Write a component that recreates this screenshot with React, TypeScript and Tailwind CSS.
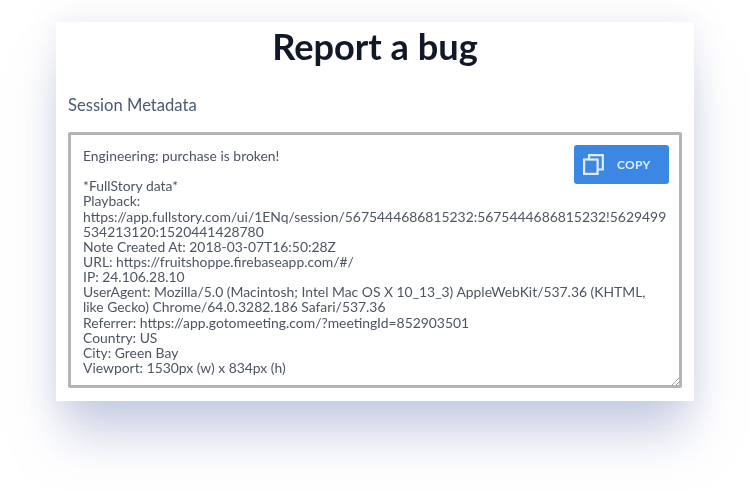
import React from 'react';

const metadataLines = [
  'Engineering: purchase is broken!',
  '',
  '*FullStory data*',
  'Playback:',
  'https://app.fullstory.com/ui/1ENq/session/5675444686815232:5675444686815232!5629499',
  '534213120:1520441428780',
  'Note Created At: 2018-03-07T16:50:28Z',
  'URL: https://fruitshoppe.firebaseapp.com/#/',
  'IP: 24.106.28.10',
  'UserAgent: Mozilla/5.0 (Macintosh; Intel Mac OS X 10_13_3) AppleWebKit/537.36 (KHTML,',
  'like Gecko) Chrome/64.0.3282.186 Safari/537.36',
  'Referrer: https://app.gotomeeting.com/?meetingId=852903501',
  'Country: US',
  'City: Green Bay',
  'Viewport: 1530px (w) x 834px (h)',
];

const App: React.FC = () => {
  return (
    <div className="w-[750px] h-[491px] overflow-hidden bg-white pt-[22px] px-[56px] font-['Lato',sans-serif]">
      <div className="h-[379px] bg-white px-3 shadow-[0_40px_46px_-8px_rgba(150,160,200,0.5),0_0_26px_rgba(170,178,215,0.25)]">
        <h1 className="text-center text-[36.2px] leading-[48px] font-bold text-[#111827] blur-[0.4px]">Report a bug</h1>
        <p className="mt-[25px] text-[16.6px] leading-[20px] text-[#4a5a72] blur-[0.4px]">Session Metadata</p>
        <div className="relative mt-[17px] h-[256px] border-[3px] border-[#b4b4b8] rounded-[2px] bg-white pt-[13px] pl-[12px]">
          <div className="text-[13.9px] leading-[15.15px] text-[#4d5563] whitespace-pre blur-[0.4px]">
            {metadataLines.map((line, i) => (
              <div key={i} className="h-[15.15px]">{line}</div>
            ))}
          </div>
          <button className="absolute top-[10px] right-[10px] w-[95px] h-[39px] flex items-center rounded-[3px] bg-[#3d87e4] pl-[9px] blur-[0.3px]">
            <svg width="21" height="21" viewBox="0 0 21 21" fill="none" stroke="#e3eefc" strokeWidth="2.2">
              <rect x="1.1" y="5.5" width="13.5" height="14.4" />
              <path d="M6 5.5V1.2h13.8V15.5h-5.2" />
            </svg>
            <span className="ml-[13px] text-[12px] font-bold tracking-[0.3px] text-[#e3eefc]">COPY</span>
          </button>
          <svg className="absolute right-0 bottom-0" width="8" height="8" viewBox="0 0 8 8" stroke="#a0a0a4" strokeWidth="1">
            <path d="M1 8L8 1M5 8L8 5" />
          </svg>
        </div>
      </div>
    </div>
  );
};

export default App;
